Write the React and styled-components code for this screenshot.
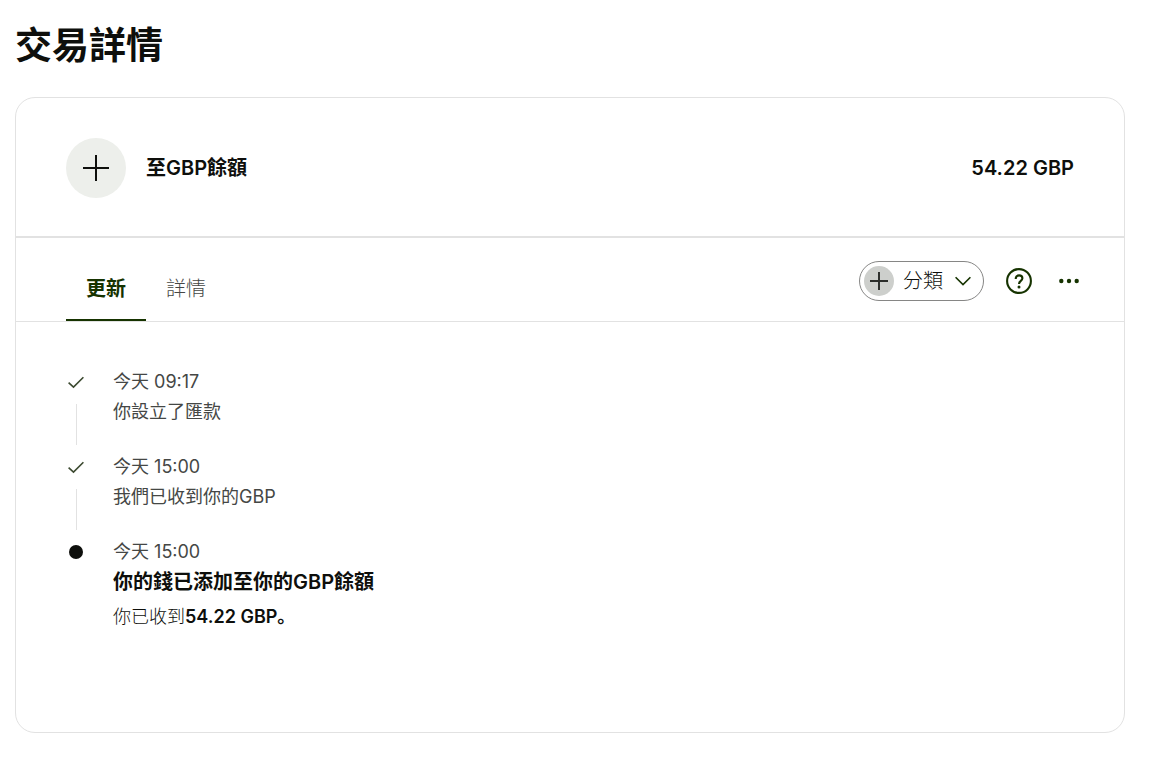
import { useState } from "react";
import styled, { createGlobalStyle } from "styled-components";

const GlobalStyle = createGlobalStyle`
    * {
    box-sizing: border-box;
}

    body {
    margin: 0;
    background: #ffffff;
    color: #0e0f0c;
    font-family: Inter, "Noto Sans CJK SC", sans-serif;
}

    button {
    padding: 0;
    border: 0;
    background: transparent;
    font-family: inherit;
    cursor: pointer;
}
`;

const Page = styled.main`
    padding: 21px 40px 40px 15px;
`;

const Title = styled.h1`
    margin: 0 0 26px;
    font-size: 37px;
    line-height: 50px;
    font-weight: 700;
`;

const Card = styled.section`
    border: 1px solid #e2e2e2;
    border-radius: 20px;
    padding-bottom: 100px;
`;

const Summary = styled.header`
    display: flex;
    align-items: center;
    gap: 20px;
    padding: 40px 50px 38px;
    border-bottom: 2px solid #e2e2e2;
`;

const Avatar = styled.span`
    display: flex;
    align-items: center;
    justify-content: center;
    width: ${({ $size }) => $size}px;
    height: ${({ $size }) => $size}px;
    border-radius: 50%;
    background: ${({ $color }) => $color};
`;

const SummaryName = styled.h2`
    flex: 1;
    margin: 0;
    font-size: 20px;
    line-height: 30px;
    font-weight: 600;
`;

const Amount = styled.span`
    font-size: 20px;
    line-height: 30px;
    font-weight: 600;
`;

const Toolbar = styled.div`
    display: flex;
    justify-content: space-between;
    padding: 0 35px 0 50px;
    border-bottom: 1px solid #e2e2e2;
`;

const TabList = styled.div`
    display: flex;
`;

const Tab = styled.button`
    padding: 20px 20px 0;
    border-bottom: 2px solid ${({ $active }) => ($active ? "#163300" : "transparent")};
    color: ${({ $active }) => ($active ? "#163300" : "#454745")};
    font-size: 20px;
    line-height: 30px;
    font-weight: ${({ $active }) => ($active ? 700 : 300)};
`;

const Actions = styled.div`
    display: flex;
    align-items: center;
    gap: 10px;
    padding: 23px 0 20px;
`;

const CategoryButton = styled.button`
    display: flex;
    align-items: center;
    height: 40px;
    margin-right: 5px;
    padding: 0 12px 0 4px;
    border: 1px solid #868685;
    border-radius: 20px;
    color: #0e0f0c;
    font-size: 20px;
    line-height: 30px;
    font-weight: 300;
`;

const CategoryLabel = styled.span`
    margin: 0 12px 0 9px;
`;

const IconButton = styled.button`
    display: flex;
    align-items: center;
    justify-content: center;
    width: 40px;
    height: 40px;
    color: #163300;
`;

const Timeline = styled.ol`
    margin: 0;
    padding: 45px 50px 0;
    list-style: none;
`;

const Event = styled.li`
    display: flex;
    gap: 27px;
`;

const Marker = styled.div`
    display: flex;
    flex-direction: column;
    align-items: center;
    gap: 7px;
    width: 20px;
    padding-bottom: 7px;
`;

const MarkerIcon = styled.span`
    display: flex;
    align-items: center;
    height: 30px;
`;

const Dot = styled.span`
    width: 14px;
    height: 14px;
    border-radius: 50%;
    background: #0e0f0c;
`;

const Line = styled.span`
    flex: 1;
    width: 1px;
    background: #e2e2e2;
`;

const EventBody = styled.div`
    padding-bottom: ${({ $last }) => ($last ? 0 : 25)}px;
`;

const EventText = styled.p`
    margin: 0;
    color: #454745;
    font-size: 18px;
    line-height: 30px;
    font-weight: 400;
`;

const EventTitle = styled.h3`
    margin: 0 0 5px;
    font-size: 20px;
    line-height: 30px;
    font-weight: 600;
`;

const EventResult = styled(EventText)`
    color: #0e0f0c;
    font-weight: 300;

    strong {
    font-weight: 600;
}
`;

const events = [
    { time: "今天 09:17", text: "你設立了匯款" },
    { time: "今天 15:00", text: "我們已收到你的GBP" },
];

const PlusIcon = ({ size, color, weight }) => (
    <svg width={size} height={size} viewBox="0 0 26 26" fill="none" stroke={color} strokeWidth={weight} aria-hidden="true">
        <path d="M13 0v26M0 13h26" />
    </svg>
);

const CheckIcon = () => (
    <svg width="16" height="16" viewBox="0 0 16 16" fill="none" stroke="#3c4a30" strokeWidth="1.6" aria-hidden="true">
        <path d="M0.6 8.6l4.9 4.5L15.4 3.2" />
    </svg>
);

const ChevronIcon = () => (
    <svg width="16" height="10" viewBox="0 0 16 10" fill="none" stroke="#163300" strokeWidth="1.6" aria-hidden="true">
        <path d="M0.6 1.2L8 8.6l7.4-7.4" />
    </svg>
);

const HelpIcon = () => (
    <svg width="26" height="26" viewBox="0 0 26 26" fill="none" stroke="currentColor" strokeWidth="2.1" aria-hidden="true">
        <circle cx="13" cy="13" r="11.9" />
        <path d="M9.7 10.9c0-2.2 1.4-3.5 3.4-3.5 1.9 0 3.3 1.1 3.3 2.9 0 2.6-3.4 2.5-3.4 5.6" />
        <circle cx="13" cy="18.9" r="1.5" fill="currentColor" stroke="none" />
    </svg>
);

const MoreIcon = () => (
    <svg width="20" height="6" viewBox="0 0 20 6" fill="currentColor" aria-hidden="true">
        <circle cx="2.3" cy="3" r="2.2" />
        <circle cx="10" cy="3" r="2.2" />
        <circle cx="17.7" cy="3" r="2.2" />
    </svg>
);

export default function App() {
    const [tab, setTab] = useState("updates");

    return (
        <>
            <GlobalStyle />
            <Page>
                <Title>交易詳情</Title>

                <Card>
                    <Summary>
                        <Avatar $size={60} $color="#edefeb">
                            <PlusIcon size={26} color="#0e0f0c" weight={2} />
                        </Avatar>
                        <SummaryName>至GBP餘額</SummaryName>
                        <Amount>54.22 GBP</Amount>
                    </Summary>

                    <Toolbar>
                        <TabList role="tablist">
                            <Tab
                                role="tab"
                                aria-selected={tab === "updates"}
                                $active={tab === "updates"}
                                onClick={() => setTab("updates")}
                            >
                                更新
                            </Tab>
                            <Tab
                                role="tab"
                                aria-selected={tab === "details"}
                                $active={tab === "details"}
                                onClick={() => setTab("details")}
                            >
                                詳情
                            </Tab>
                        </TabList>

                        <Actions>
                            <CategoryButton type="button">
                                <Avatar $size={30} $color="#cdcfcc">
                                    <PlusIcon size={18} color="#2b2d2a" weight={2.8} />
                                </Avatar>
                                <CategoryLabel>分類</CategoryLabel>
                                <ChevronIcon />
                            </CategoryButton>
                            <IconButton type="button" aria-label="說明">
                                <HelpIcon />
                            </IconButton>
                            <IconButton type="button" aria-label="更多">
                                <MoreIcon />
                            </IconButton>
                        </Actions>
                    </Toolbar>

                    <Timeline>
                        {events.map((event) => (
                            <Event key={event.time}>
                                <Marker>
                                    <MarkerIcon>
                                        <CheckIcon />
                                    </MarkerIcon>
                                    <Line />
                                </Marker>
                                <EventBody>
                                    <EventText>{event.time}</EventText>
                                    <EventText>{event.text}</EventText>
                                </EventBody>
                            </Event>
                        ))}
                        <Event>
                            <Marker>
                                <MarkerIcon>
                                    <Dot />
                                </MarkerIcon>
                            </Marker>
                            <EventBody $last>
                                <EventText>今天 15:00</EventText>
                                <EventTitle>你的錢已添加至你的GBP餘額</EventTitle>
                                <EventResult>
                                    你已收到<strong>54.22 GBP。</strong>
                                </EventResult>
                            </EventBody>
                        </Event>
                    </Timeline>
                </Card>
            </Page>
        </>
    );
}
